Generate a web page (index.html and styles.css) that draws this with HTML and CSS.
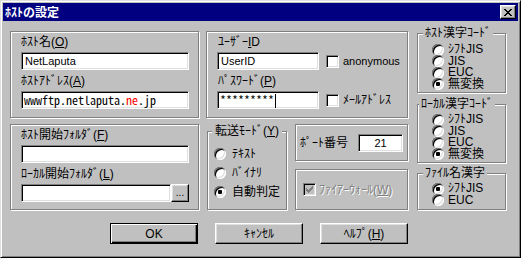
FILE: index.html
```html
<!DOCTYPE html>
<html lang="ja">
<head>
    <meta charset="UTF-8">
    <title>ﾎｽﾄの設定</title>
    <link rel="stylesheet" href="styles.css">
</head>
<body>
    <div class="window">
        <div class="titlebar">
            <span class="title">ﾎｽﾄの設定</span>
            <span class="close">
                <svg width="8" height="7" viewBox="0 0 8 7" shape-rendering="crispEdges">
                    <path fill="#000" d="M0 0h2v1H0z M6 0h2v1H6z M1 1h2v1H1z M5 1h2v1H5z M2 2h4v1H2z M3 3h2v1H3z M2 4h4v1H2z M1 5h2v1H1z M5 5h2v1H5z M0 6h2v1H0z M6 6h2v1H6z"/>
                </svg>
            </span>
        </div>

        <div class="content">
            <div class="columns">
                <div class="col col-a">
                    <div class="group group-host">
                        <div class="label">ﾎｽﾄ名(<u>O</u>)</div>
                        <div class="field field-wide">NetLaputa</div>
                        <div class="label">ﾎｽﾄｱﾄﾞﾚｽ(<u>A</u>)</div>
                        <div class="field field-wide mono">wwwftp.netlaputa.<span class="red">ne</span>.jp</div>
                    </div>
                    <div class="group group-folder">
                        <div class="label">ﾎｽﾄ開始ﾌｫﾙﾀﾞ(<u>F</u>)</div>
                        <div class="field field-wide"></div>
                        <div class="label">ﾛｰｶﾙ開始ﾌｫﾙﾀﾞ(<u>L</u>)</div>
                        <div class="field-row">
                            <div class="field field-browse"></div>
                            <div class="btn btn-small">...</div>
                        </div>
                    </div>
                </div>

                <div class="col col-b">
                    <div class="group group-user">
                        <div class="label label-user">ﾕｰｻﾞｰ<u>I</u>D</div>
                        <div class="field-row">
                            <div class="field field-user">UserID</div>
                            <span class="check"></span>
                            <span class="check-text latin">anonymous</span>
                        </div>
                        <div class="label label-user">ﾊﾟｽﾜｰﾄﾞ(<u>P</u>)</div>
                        <div class="field-row">
                            <div class="field field-user mono">*********<span class="caret"></span></div>
                            <span class="check"></span>
                            <span class="check-text">ﾒｰﾙｱﾄﾞﾚｽ</span>
                        </div>
                    </div>

                    <div class="lower">
                        <fieldset class="box transfer">
                            <legend>転送ﾓｰﾄﾞ(<u>Y</u>)</legend>
                            <div class="radios">
                                <div class="radio-row"><span class="radio"></span><span>ﾃｷｽﾄ</span></div>
                                <div class="radio-row"><span class="radio"></span><span>ﾊﾞｲﾅﾘ</span></div>
                                <div class="radio-row"><span class="radio on"></span><span>自動判定</span></div>
                            </div>
                        </fieldset>
                        <div class="side">
                            <div class="group port">
                                <span>ﾎﾟｰﾄ番号</span>
                                <div class="field field-port">21</div>
                            </div>
                            <div class="group firewall">
                                <span class="check check-off">
                                    <svg width="7" height="7" viewBox="0 0 7 7" shape-rendering="crispEdges">
                                        <path fill="#808080" d="M6 0h1v1H6z M5 1h2v1H5z M0 2h1v1H0z M4 2h3v1H4z M0 3h2v1H0z M3 3h3v1H3z M0 4h5v1H0z M1 5h3v1H1z M2 6h1v1H2z"/>
                                    </svg>
                                </span>
                                <span class="disabled">ﾌｧｲｱｰｳｫｰﾙ(<u>W</u>)</span>
                            </div>
                        </div>
                    </div>
                </div>

                <div class="col col-c">
                    <fieldset class="box code code-host">
                        <legend>ﾎｽﾄ漢字ｺｰﾄﾞ</legend>
                        <div class="radios">
                            <div class="radio-row"><span class="radio"></span><span>ｼﾌﾄJIS</span></div>
                            <div class="radio-row"><span class="radio"></span><span>JIS</span></div>
                            <div class="radio-row"><span class="radio"></span><span>EUC</span></div>
                            <div class="radio-row"><span class="radio on"></span><span>無変換</span></div>
                        </div>
                    </fieldset>
                    <fieldset class="box code code-local">
                        <legend class="legend-wide">ﾛｰｶﾙ漢字ｺｰﾄﾞ</legend>
                        <div class="radios">
                            <div class="radio-row"><span class="radio"></span><span>ｼﾌﾄJIS</span></div>
                            <div class="radio-row"><span class="radio"></span><span>JIS</span></div>
                            <div class="radio-row"><span class="radio"></span><span>EUC</span></div>
                            <div class="radio-row"><span class="radio on"></span><span>無変換</span></div>
                        </div>
                    </fieldset>
                    <fieldset class="box code code-file">
                        <legend>ﾌｧｲﾙ名漢字</legend>
                        <div class="radios">
                            <div class="radio-row"><span class="radio on"></span><span>ｼﾌﾄJIS</span></div>
                            <div class="radio-row"><span class="radio"></span><span>EUC</span></div>
                        </div>
                    </fieldset>
                </div>
            </div>

            <div class="buttons">
                <div class="btn btn-default">OK</div>
                <div class="btn">ｷｬﾝｾﾙ</div>
                <div class="btn">ﾍﾙﾌﾟ(<u>H</u>)</div>
            </div>
        </div>
    </div>
</body>
</html>
```

FILE: styles.css
```css
*
{
  margin: 0;
  padding: 0;
  box-sizing: border-box;
}
body{
  font-family: "Liberation Sans", "Noto Sans CJK JP", sans-serif;
  font-size: 12px;
  line-height: 12px;
  color: #000;
  background: #c0c0c0;
}
u{
  text-underline-offset: 1px;
}
.latin{
  font-size: 11px;
}

/* window frame */
.window{
  width: 521px;
  height: 258px;
  padding: 2px;
  background: #c0c0c0;
  border: 1px solid;
  border-color: #dfdfdf #000 #000 #dfdfdf;
  box-shadow: inset 1px 1px #fff, inset -1px -1px #808080;
}
.titlebar{
  height: 18px;
  padding: 0 2px;
  display: flex;
  align-items: center;
  justify-content: space-between;
  background: #000080;
  color: #fff;
}
.title{
  font-family: "Noto Sans CJK JP", sans-serif;
  font-weight: bold;
}
.close{
  width: 16px;
  height: 14px;
  display: flex;
  align-items: center;
  justify-content: center;
  background: #c0c0c0;
  border: 1px solid;
  border-color: #fff #000 #000 #fff;
  box-shadow: inset -1px -1px #808080, inset 1px 1px #dfdfdf;
}
.close svg{
  display: block;
}

.content{
  padding: 6px 0 0 7px;
}
.columns{
  display: flex;
  align-items: flex-start;
}
.col{
  display: flex;
  flex-direction: column;
}
.col-a{
  width: 189px;
  margin-top: 4px;
  gap: 6px;
}
.col-b{
  width: 202px;
  margin: 4px 0 0 7px;
  gap: 6px;
}
.col-c{
  width: 89px;
  margin-left: 9px;
}

/* etched frames */
.group{
  border: 1px solid #808080;
  box-shadow: 1px 1px #fff, inset 1px 1px #fff;
}
.box{
  min-width: 0;
  border: 1px solid #808080;
  box-shadow: 1px 1px #fff, inset 1px 1px #fff;
}
.box legend{
  padding: 0 2px;
  line-height: 12px;
  background: #c0c0c0;
}

.group-host{
  height: 87px;
  padding: 4px 0 0 10px;
}
.group-folder{
  height: 86px;
  padding: 4px 0 0 10px;
}
.group-user{
  height: 87px;
  padding: 4px 0 0 10px;
}
.label{
  line-height: 12px;
  margin-bottom: 4px;
}
.field + .label,
.field-row + .label{
  margin-top: 5px;
}
.label-user{
  padding-left: 1px;
}

/* edit boxes */
.field{
  height: 18px;
  padding: 0 3px;
  font-size: 11px;
  line-height: 16px;
  white-space: nowrap;
  overflow: hidden;
  background: #fff;
  border: 1px solid;
  border-color: #808080 #fff #fff #808080;
  box-shadow: inset 1px 1px #000, inset -1px -1px #dfdfdf;
}
.field-wide{
  width: 168px;
}
.field-browse{
  width: 150px;
}
.field-user{
  width: 102px;
}
.field-port{
  width: 45px;
  text-align: center;
}
.mono{
  font-family: "Noto Sans Mono CJK JP", "Liberation Mono", monospace;
  font-size: 12px;
  padding-left: 2px;
}
.red{
  color: #ff0000;
}
.caret{
  display: inline-block;
  width: 1px;
  height: 14px;
  margin-left: 1px;
  vertical-align: -3px;
  background: #000;
}
.field-row{
  display: flex;
  align-items: center;
}

/* check boxes */
.check{
  flex: none;
  width: 13px;
  height: 13px;
  margin-left: 7px;
  display: flex;
  align-items: center;
  justify-content: center;
  background: #fff;
  border: 1px solid;
  border-color: #808080 #fff #fff #808080;
  box-shadow: inset 1px 1px #000, inset -1px -1px #dfdfdf;
}
.check-text{
  margin-left: 4px;
}
.check-off{
  margin-left: 0;
  background: #c0c0c0;
}
.disabled{
  margin-left: 3px;
  color: #808080;
  text-shadow: 1px 1px #fff;
}

/* lower middle part */
.lower{
  display: flex;
}
.transfer{
  width: 80px;
  height: 85px;
  margin: 1px 0 0 1px;
  padding-left: 4px;
}
.transfer legend{
  padding: 0 3px;
}
.transfer .radios{
  margin: 7px 0 0 2px;
}
.transfer .radio-row{
  height: 19px;
  gap: 6px;
}
.side{
  width: 113px;
  margin-left: 8px;
  display: flex;
  flex-direction: column;
  gap: 8px;
}
.port{
  height: 37px;
  padding: 0 4px;
  display: flex;
  align-items: center;
  justify-content: space-between;
}
.firewall{
  height: 41px;
  padding-left: 7px;
  display: flex;
  align-items: center;
}

/* radio buttons */
.radio-row{
  display: flex;
  align-items: center;
  white-space: nowrap;
}
.radio{
  position: relative;
  flex: none;
  width: 12px;
  height: 12px;
  border-radius: 50%;
  background: #fff;
  box-shadow: inset 1px 1px #808080, inset -1px -1px #fff,
  inset 2px 2px #000, inset -2px -2px #dfdfdf;
}
.radio.on::after{
  content: '';
  position: absolute;
  left: 4px;
  top: 4px;
  width: 4px;
  height: 4px;
  border-radius: 1px;
  background: #000;
}

/* right column */
.code{
  padding-left: 5px;
}
.code .radios{
  margin: 4px 0 0 9px;
}
.code .radio-row{
  height: 11.5px;
  gap: 4px;
}
.code .radio-row span + span{
  line-height: 11px;
}
.code-host{
  height: 66px;
}
.code-host .radios{
  margin-top: 5px;
}
.code-local{
  height: 65px;
  margin-top: 5px;
}
.code-file{
  height: 43px;
  margin-top: 4px;
}
.legend-wide{
  margin-left: -4px;
}

/* push buttons */
.buttons{
  display: flex;
  gap: 17px;
  margin: 13px 0 0 100px;
}
.btn{
  width: 88px;
  height: 21px;
  display: flex;
  align-items: center;
  justify-content: center;
  background: #c0c0c0;
  border: 1px solid;
  border-color: #fff #000 #000 #fff;
  box-shadow: inset -1px -1px #808080, inset 1px 1px #dfdfdf;
  user-select: none;
}
.btn-default{
  border-color: #000;
  box-shadow: inset 1px 1px #fff, inset -1px -1px #000, inset -2px -2px #808080;
}
.btn-small{
  width: 18px;
  height: 18px;
  align-items: flex-end;
  padding-bottom: 3px;
  font-size: 10px;
  line-height: 10px;
}
```
